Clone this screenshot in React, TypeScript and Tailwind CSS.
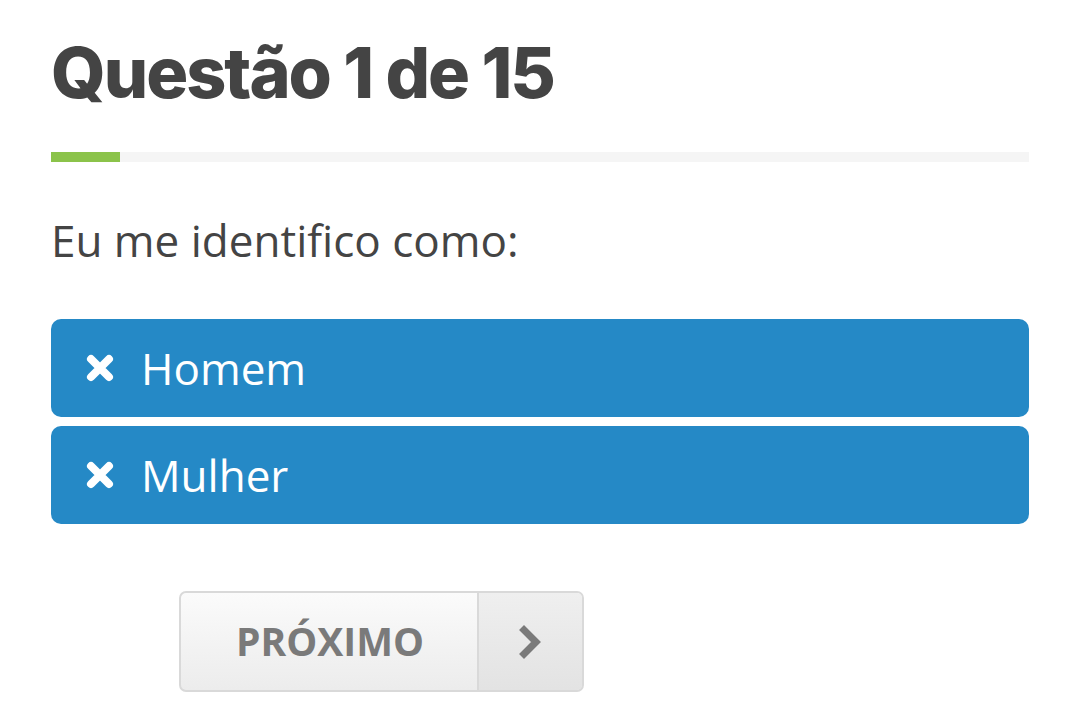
const options = ['Homem', 'Mulher'];

const Cross = () => (
  <svg width="30" height="30" viewBox="0 0 30 30" fill="none">
    <path d="M6 6 L24 24 M24 6 L6 24" stroke="#ffffff" strokeWidth="8" strokeLinecap="round" />
  </svg>
);

const App = () => {
  return (
    <div className="min-h-[715px] bg-white pl-[51px] pr-[48px] pt-[38px]" style={{ fontFamily: '"Open Sans", sans-serif' }}>
      <h1
        className="text-[70px] leading-[70px] font-extrabold tracking-[-2px] text-[#444444]"
        style={{ fontFamily: 'Inter, sans-serif' }}
      >
        Questão 1 de 15
      </h1>

      {/* barra de progresso */}
      <div className="mt-[44px] h-[10px] w-full bg-[#f5f5f5]">
        <div className="h-full w-[69px] bg-[#8bc34a]"></div>
      </div>

      <p className="mt-[48px] text-[44px] leading-[60px] text-[#444444]">Eu me identifico como:</p>

      <div className="mt-[49px] flex flex-col gap-[9px]">
        {options.map((option) => (
          <button
            key={option}
            className="flex h-[98px] w-full items-center gap-[26px] rounded-[10px] bg-[#2589c6] pl-[34px] text-left text-[44px] text-white"
          >
            <Cross />
            <span>{option}</span>
          </button>
        ))}
      </div>

      <div className="ml-[128px] mt-[67px] flex h-[101px] w-[405px] overflow-hidden rounded-[7px] border-2 border-[#d9d9d9] bg-gradient-to-b from-[#fbfbfb] to-[#ececec]">
        <div className="flex flex-1 items-center justify-center pl-[2px] text-[39px] font-bold text-[#7a7a7a]">PRÓXIMO</div>
        <div className="flex w-[105px] items-center justify-center border-l-2 border-[#d9d9d9] bg-gradient-to-b from-[#efefef] to-[#e3e3e3]">
          <svg width="26" height="34" viewBox="0 0 26 34" fill="none">
            <path d="M6 5 L18 17 L6 29" stroke="#7a7a7a" strokeWidth="7" strokeLinecap="square" strokeLinejoin="miter" />
          </svg>
        </div>
      </div>
    </div>
  );
};

export default App;
